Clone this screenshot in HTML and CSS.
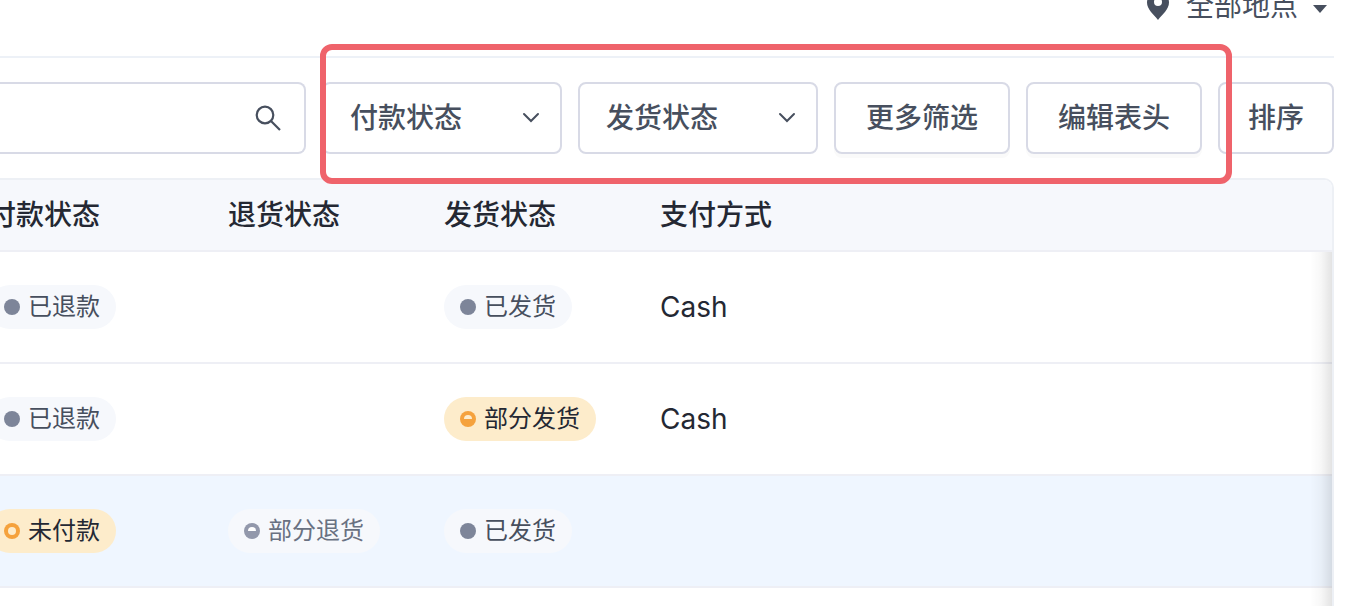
FILE: index.html
```html
<!DOCTYPE html>
<html lang="zh">

<head>
    <meta charset="UTF-8">
    <meta name="viewport" content="width=device-width, initial-scale=1.0">
    <title>订单</title>
    <link rel="stylesheet" href="styles.css">
</head>

<body>
    <div class="header">
        <button class="location" type="button">
            <svg class="pin" width="24" height="28" viewBox="0 0 24 28">
                <path fill-rule="evenodd" d="M12 0C5.6 0 1 4.7 1 10.6C1 17.500 7.500 22.500 12 28C16.500 22.500 23 17.500 23 10.600C23 4.700 18.400 0 12 0ZM12 6a4 4 0 1 1 0 8a4 4 0 1 1 0-8Z" />
            </svg>
            <span>全部地点</span>
            <svg class="caret" width="14" height="8" viewBox="0 0 14 8">
                <path d="M0 0H14L7 8Z" />
            </svg>
        </button>
    </div>

    <div class="toolbar">
        <div class="search">
            <input type="text" aria-label="搜索">
            <svg width="28" height="28" viewBox="0 0 28 28">
                <circle cx="11" cy="11" r="8.300" />
                <path d="M17 17L26 26" />
            </svg>
        </div>
        <div class="filters">
            <div class="select">
                <select aria-label="付款状态">
                    <option>付款状态</option>
                </select>
                <svg width="18" height="12" viewBox="0 0 18 12">
                    <path d="M2 2L9 9L16 2" />
                </svg>
            </div>
            <div class="select">
                <select aria-label="发货状态">
                    <option>发货状态</option>
                </select>
                <svg width="18" height="12" viewBox="0 0 18 12">
                    <path d="M2 2L9 9L16 2" />
                </svg>
            </div>
            <button class="btn btn-shadow" type="button">更多筛选</button>
            <button class="btn btn-shadow" type="button">编辑表头</button>
            <div class="highlight"></div>
        </div>
        <button class="btn btn-sort" type="button">排序</button>
    </div>

    <div class="table-wrap">
        <table>
            <colgroup>
                <col class="col-first">
                <col class="col-status">
                <col class="col-status">
                <col>
            </colgroup>
            <thead>
                <tr>
                    <th>付款状态</th>
                    <th>退货状态</th>
                    <th>发货状态</th>
                    <th>支付方式</th>
                </tr>
            </thead>
            <tbody>
                <tr>
                    <td><span class="tag"><i class="dot"></i>已退款</span></td>
                    <td></td>
                    <td><span class="tag"><i class="dot"></i>已发货</span></td>
                    <td>Cash</td>
                </tr>
                <tr>
                    <td><span class="tag"><i class="dot"></i>已退款</span></td>
                    <td></td>
                    <td><span class="tag tag-warn"><i class="dot half"></i>部分发货</span></td>
                    <td>Cash</td>
                </tr>
                <tr class="active">
                    <td><span class="tag tag-warn"><i class="dot ring"></i>未付款</span></td>
                    <td><span class="tag tag-light"><i class="dot half"></i>部分退货</span></td>
                    <td><span class="tag"><i class="dot"></i>已发货</span></td>
                    <td></td>
                </tr>
                <tr>
                    <td></td>
                    <td></td>
                    <td></td>
                    <td></td>
                </tr>
            </tbody>
        </table>
        <div class="side-shadow"></div>
    </div>
</body>

</html>
```

FILE: styles.css
```css
* {
    box-sizing: border-box;
}

body {
    margin: 0;
    height: 100vh;
    overflow: hidden;
    background-color: #fff;
    color: #242833;
    font-family: Inter, "Noto Sans CJK SC", sans-serif;
    font-size: 28px;
    line-height: 40px;
}

button,
input,
select {
    font: inherit;
    color: #474f5e;
}

.header {
    display: flex;
    justify-content: flex-end;
    margin: -14px 28px 0 0;
    padding-bottom: 30px;
    border-bottom: 2px solid #edf1f7;
}

.location {
    display: flex;
    align-items: center;
    padding: 0 7px 0 0;
    border: none;
    background: none;
    cursor: pointer;
}

.location svg {
    fill: #474f5e;
}

.pin {
    margin-right: 16px;
}

.caret {
    margin: 6px 0 0 15px;
}

.toolbar {
    display: flex;
    gap: 16px;
    margin: 24px 28px 24px 0;
}

.search {
    flex: 1;
    display: flex;
    align-items: center;
    min-width: 0;
    height: 72px;
    padding-right: 22px;
    border: 2px solid #d8dae6;
    border-left: none;
    border-radius: 0 8px 8px 0;
}

.search input {
    flex: 1;
    min-width: 0;
    border: none;
    outline: none;
    background: none;
}

.search svg {
    fill: none;
    stroke: #474f5e;
    stroke-width: 2.2;
}

.filters {
    position: relative;
    z-index: 1;
    display: flex;
    gap: 16px;
}

.select {
    display: grid;
    align-items: center;
    width: 240px;
}

.select select,
.select svg {
    grid-area: 1 / 1;
}

.select select {
    appearance: none;
    width: 100%;
    height: 72px;
    padding: 0 26px;
    border: 2px solid #d8dae6;
    border-radius: 8px;
    background-color: #fff;
    font-weight: 500;
}

.select svg {
    justify-self: end;
    margin-right: 22px;
    fill: none;
    stroke: #474f5e;
    stroke-width: 2;
    stroke-linecap: round;
    pointer-events: none;
}

.btn {
    height: 72px;
    padding: 0 30px;
    border: 2px solid #d8dae6;
    border-radius: 8px;
    background-color: #fff;
    font-weight: 500;
    white-space: nowrap;
    cursor: pointer;
}

.btn-shadow {
    box-shadow: 0 4px 0 #fafafa;
}

.btn-sort {
    padding: 0 28px;
}

/* 红框标注 */
.highlight {
    position: absolute;
    top: -38px;
    right: -30px;
    bottom: -30px;
    left: -2px;
    border: 6px solid #ef636b;
    border-radius: 12px;
    pointer-events: none;
}

.table-wrap {
    position: relative;
    margin-right: 28px;
    border: solid #edf0f5;
    border-width: 2px 2px 0 0;
    border-radius: 0 10px 0 0;
    overflow: hidden;
}

table {
    width: calc(100% + 12px);
    margin-left: -12px;
    border-collapse: separate;
    border-spacing: 0;
    table-layout: fixed;
}

.col-first {
    width: 240px;
}

.col-status {
    width: 216px;
}

th,
td {
    padding: 0;
    border-bottom: 2px solid #eeeff5;
    text-align: left;
    white-space: nowrap;
}

th {
    height: 72px;
    background-color: #f6f8fc;
    font-weight: 500;
}

td {
    height: 112px;
}

.active td {
    background-color: #eff6ff;
}

.tag {
    display: inline-flex;
    align-items: center;
    gap: 8px;
    height: 44px;
    padding: 0 16px;
    border-radius: 22px;
    background-color: #f6f8fc;
    color: #474f5e;
    font-size: 24px;
    line-height: 32px;
    vertical-align: middle;
}

.tag-light {
    color: #697182;
}

.tag-warn {
    background-color: #fdeccb;
    color: #242833;
}

.dot {
    display: flex;
    justify-content: center;
    width: 16px;
    height: 16px;
    border-radius: 50%;
    background-color: #7d8599;
}

.tag-light .dot {
    background-color: #9298ab;
}

.tag-warn .dot {
    background-color: #f5a23d;
}

.ring {
    align-items: center;
}

.ring::after {
    content: "";
    width: 8px;
    height: 8px;
    border-radius: 50%;
    background-color: #fdeccb;
}

.half::after {
    content: "";
    width: 8px;
    height: 4px;
    margin-top: 4px;
    border-radius: 4px 4px 0 0;
    background-color: #fff;
}

.tag-warn .half::after {
    background-color: #fdeccb;
}

.side-shadow {
    position: absolute;
    top: 72px;
    right: 0;
    bottom: 0;
    width: 22px;
    background: linear-gradient(to right, rgba(0, 0, 0, 0), rgba(0, 0, 0, 0.03) 50%, rgba(0, 0, 0, 0.11));
    pointer-events: none;
}
```
